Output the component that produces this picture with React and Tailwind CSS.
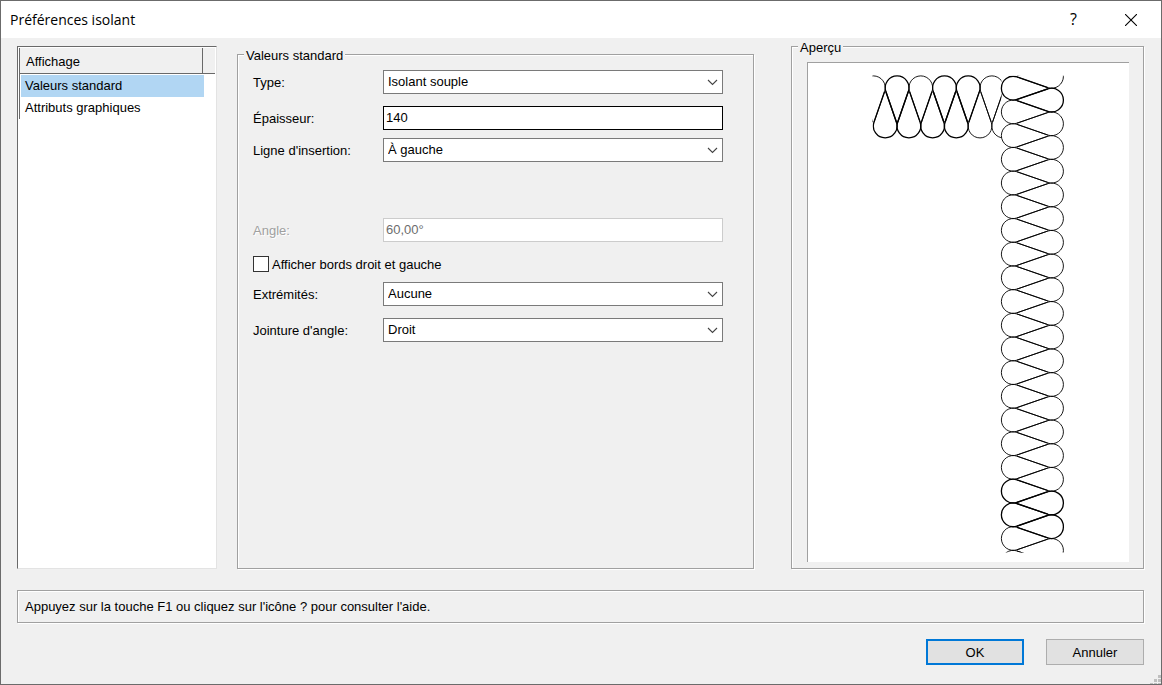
import { useState } from 'react'

const pages = ['Valeurs standard', 'Attributs graphiques']

// Insulation batt geometry: u runs along the batt, v across it
const PITCH = 23.7
const R = 11.86
const NEAR = 12
const FAR = 50.2

function loopPoints(u, far, place) {
  const dir = far ? -1 : 1
  const centre = far ? FAR : NEAR
  const tip = far ? NEAR + 3.7 : FAR - 3.7
  const shoulder = centre + dir * 3.7
  return [
    place(u - 0.6, tip),
    place(u - 11.25, shoulder),
    place(u + 11.25, shoulder),
    place(u + 0.6, tip),
  ].map(([x, y]) => `${x.toFixed(2)} ${y.toFixed(2)}`)
}

function Loop({ u, far, vertical, bold }) {
  const place = vertical ? (a, v) => [193.3 + v, a] : (a, v) => [a, 12.8 + v]
  const pts = loopPoints(u, far, place)
  const sweep = far === vertical ? 1 : 0
  const flag = vertical ? sweep : 1 - (far ? 1 : 0)
  return (
    <path
      d={`M${pts[0]} L${pts[1]} A${R} ${R} 0 1 ${flag} ${pts[2]} L${pts[3]}`}
      strokeWidth={bold ? 1.3 : 0.9}
    />
  )
}

const range = (from, to) => Array.from({ length: to - from + 1 }, (_, i) => from + i)

function InsulationPreview() {
  return (
    <svg viewBox="0 0 321 499" className="block h-full w-full" fill="none" stroke="#000" aria-label="Aperçu de l'isolant">
      <clipPath id="across"><rect x="64.5" y="12" width="129" height="66" /></clipPath>
      <clipPath id="down"><rect x="190" y="12.8" width="70" height="476.7" /></clipPath>
      <g clipPath="url(#across)">
        {range(0, 5).map(k => (
          <Loop key={`t${k}`} u={65.4 + k * PITCH} far={false} vertical={false} bold={[1, 3, 4].includes(k)} />
        ))}
        {range(0, 5).map(k => (
          <Loop key={`b${k}`} u={77.2 + k * PITCH} far vertical={false} bold={k < 4} />
        ))}
      </g>
      <g clipPath="url(#down)">
        {range(0, 20).map(k => (
          <Loop key={`l${k}`} u={25.2 + k * PITCH} far={false} vertical bold={k === 0 || k === 17 || k === 18} />
        ))}
        {range(-1, 19).map(k => (
          <Loop key={`r${k}`} u={37.1 + k * PITCH} far vertical bold={k === 0 || k === 17 || k === 18} />
        ))}
      </g>
    </svg>
  )
}

function GroupBox({ title, className, children }) {
  return (
    <fieldset className={`flex min-w-0 flex-col border border-[#a0a0a0] shadow-[1px_1px_0_#fff,inset_1px_1px_0_#fff] ${className}`}>
      <legend className="ml-1.5 h-4 bg-[#f0f0f0] px-0.5 leading-5">{title}</legend>
      {children}
    </fieldset>
  )
}

function Field({ id, label, disabled, className = '', children }) {
  return (
    <div className={`flex items-center ${className}`}>
      <label
        htmlFor={id}
        className={`w-[130px] shrink-0 pt-0.5 ${disabled ? 'text-[#a0a0a0] [text-shadow:1px_1px_0_#fff]' : ''}`}
      >
        {label}
      </label>
      {children}
    </div>
  )
}

function Select({ id, options }) {
  return (
    <div className="relative min-w-0 flex-1">
      <select id={id} className="block h-6 w-full appearance-none border border-[#7a7a7a] bg-white pl-1 pr-6 outline-none">
        {options.map(option => <option key={option}>{option}</option>)}
      </select>
      <svg className="pointer-events-none absolute right-[5px] top-[9px]" width="11" height="7" viewBox="0 0 11 7" fill="none" stroke="#444" strokeWidth="1.1">
        <path d="M1 1l4.5 4.5L10 1" />
      </svg>
    </div>
  )
}

export default function App() {
  const [page, setPage] = useState(pages[0])
  const [thickness, setThickness] = useState('140')
  const [edges, setEdges] = useState(false)

  return (
    <div className="relative flex min-h-screen flex-col border border-[#6b6b6b] bg-[#f0f0f0] font-['Liberation_Sans',Arial,sans-serif] text-[13px] leading-4 text-black">
      {/* Title bar */}
      <header className="flex h-[37px] items-center bg-white pl-[9px] pr-6">
        <h1 className="flex-1 font-['Open_Sans','Noto_Sans',sans-serif] text-[14px] leading-4">Préférences isolant</h1>
        <button type="button" aria-label="Aide" className="mr-12 pb-0.5 font-['Open_Sans','Noto_Sans',sans-serif] text-[16px] leading-4">?</button>
        <button type="button" aria-label="Fermer">
          <svg width="12" height="12" viewBox="0 0 12 12" stroke="#000" strokeWidth="1.1">
            <path d="M0 0l12 12M12 0L0 12" />
          </svg>
        </button>
      </header>

      <main className="flex flex-1 flex-col pb-[19px] pl-4 pr-[17px]">
        <div className="flex flex-1">
          {/* Page list */}
          <nav className="mr-5 mt-2 w-[200px] shrink-0 border border-b-[#e3e3e3] border-l-[#696969] border-r-[#e3e3e3] border-t-[#696969] bg-white p-px">
            <div className="border-l border-[#696969]">
              <div className="flex h-[26px] border-b border-[#696969] bg-[#f0f0f0]">
                <div className="w-[183px] border-r border-[#696969] pl-1.5 pt-1.5">Affichage</div>
              </div>
              <ul className="pl-px pt-px">
                {pages.map(name => (
                  <li key={name}>
                    <button
                      type="button"
                      onClick={() => setPage(name)}
                      className={`block h-[22px] w-[183px] pl-1 text-left ${name === page ? 'bg-[#b1d6f3]' : ''}`}
                    >
                      {name}
                    </button>
                  </li>
                ))}
              </ul>
            </div>
          </nav>

          <GroupBox title="Valeurs standard" className="mr-[37px] mt-2 flex-1">
            <div className="pl-[15px] pr-[30px] pt-2">
              <Field id="type" label="Type:">
                <Select id="type" options={['Isolant souple', 'Isolant rigide']} />
              </Field>
              <Field id="thickness" label="Épaisseur:" className="mt-3">
                <input
                  id="thickness"
                  value={thickness}
                  onChange={e => setThickness(e.target.value)}
                  className="h-6 min-w-0 flex-1 border border-black bg-white pb-0.5 pl-0.5 outline-none"
                />
              </Field>
              <Field id="insertion" label="Ligne d'insertion:" className="mt-2">
                <Select id="insertion" options={['À gauche', 'Au centre', 'À droite']} />
              </Field>
              <Field id="angle" label="Angle:" disabled className="mt-14">
                <input
                  id="angle"
                  defaultValue="60,00°"
                  disabled
                  className="h-6 min-w-0 flex-1 border border-[#cccccc] bg-white pb-0.5 pl-0.5 text-[#6d6d6d]"
                />
              </Field>
              <div className="mt-3.5 flex h-4 items-center gap-[3px]">
                <input
                  id="edges"
                  type="checkbox"
                  checked={edges}
                  onChange={e => setEdges(e.target.checked)}
                  className="size-4 appearance-none border border-[#333] bg-white checked:bg-[#333]"
                />
                <label htmlFor="edges" className="pt-0.5">Afficher bords droit et gauche</label>
              </div>
              <Field id="ends" label="Extrémités:" className="mt-2.5">
                <Select id="ends" options={['Aucune', 'Droites']} />
              </Field>
              <Field id="joint" label="Jointure d'angle:" className="mt-3">
                <Select id="joint" options={['Droit', 'Arrondi']} />
              </Field>
            </div>
          </GroupBox>

          <GroupBox title="Aperçu" className="w-[353px] shrink-0">
            <div className="flex flex-1 flex-col pb-1.5 pl-[15px] pr-3.5 pt-2">
              <div className="min-h-0 flex-1 border-l border-t border-[#a0a0a0] bg-white">
                <InsulationPreview />
              </div>
            </div>
          </GroupBox>
        </div>

        <p className="mt-[21px] h-[33px] border border-[#a0a0a0] pl-[7px] pt-2 shadow-[1px_1px_0_#fff,inset_1px_1px_0_#fff]">
          Appuyez sur la touche F1 ou cliquez sur l'icône ? pour consulter l'aide.
        </p>

        <footer className="mt-4 flex justify-end gap-[22px]">
          <button type="button" className="h-[26px] w-[98px] border-2 border-[#0078d7] bg-[#e1e1e1] pt-0.5">OK</button>
          <button type="button" className="h-[26px] w-[98px] border border-[#adadad] bg-[#e1e1e1] pt-0.5">Annuler</button>
        </footer>
      </main>

      {/* Resize grip */}
      <svg className="absolute bottom-0 right-0" width="11" height="9" viewBox="0 0 11 9" fill="#bfbfbf">
        <path d="M8 0h3v3H8zM4 4h3v3H4zM8 4h3v3H8zM0 8h3v1H0zM4 8h3v1H4zM8 8h3v1H8z" />
      </svg>
    </div>
  )
}
